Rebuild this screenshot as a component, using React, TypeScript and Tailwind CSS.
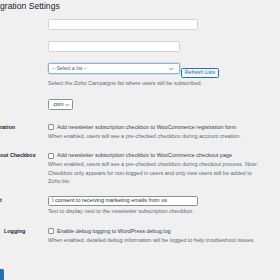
import React from 'react';

const Checkbox: React.FC = () => (
    <span className="inline-block w-[6px] h-[6px] shrink-0 bg-white border border-[#8c8f94] rounded-[1px]" />
);

const Chevron: React.FC = () => (
    <svg width="5" height="4" viewBox="0 0 10 8" className="shrink-0">
        <path d="M1.5 2 L5 5.5 L8.5 2" fill="none" stroke="#50575e" strokeWidth="1.4" />
    </svg>
);

export default function App() {
    return (
        <div className="w-[280px] h-[280px] overflow-hidden bg-[#f0f0f1] text-[#3c434a] font-['Liberation_Sans',Arial,sans-serif]">
            {/* Page title */}
            <h1 className="h-[12px] leading-[12px] text-[8.6px] text-[#1d2327] whitespace-nowrap">gration Settings</h1>

            <div className="grid grid-cols-[48px_1fr]">
                {/* API fields */}
                <div />
                <div className="mt-[7px] w-[150px] h-[11px] bg-white border border-[#d3d3d6] rounded-[1.5px]" />

                <div />
                <div className="mt-[11px] w-[132px] h-[11px] bg-white border border-[#d3d3d6] rounded-[1.5px]" />

                {/* Mailing list */}
                <div />
                <div className="mt-[11px]">
                    <div className="flex items-start gap-[1px]">
                        <div className="w-[132px] h-[11px] bg-white border border-[#8fb3d6] rounded-[1.5px] flex items-center justify-between pl-[3px] pr-[5px] shadow-[0_0_0_0.5px_#b5cfe8]">
                            <span className="text-[5px] leading-none text-[#50575e]">-- Select a list --</span>
                            <Chevron />
                        </div>
                        <button className="mt-[5px] w-[38px] h-[10px] bg-[#f6f7f7] border border-[#2271b1] rounded-[1.5px] text-[5.2px] leading-none text-[#2271b1] flex items-center justify-center">
                            Refresh Lists
                        </button>
                    </div>
                    <p className="mt-[1px] text-[5.5px] leading-[9px] text-[#646970] whitespace-nowrap">
                        Select the Zoho Campaigns list where users will be subscribed.
                    </p>
                </div>

                {/* Domain */}
                <div />
                <div className="mt-[11px] w-[25px] h-[11px] bg-white border border-[#8c8f94] rounded-[1.5px] flex items-center gap-[2px] pl-[3px]">
                    <span className="text-[5.2px] leading-none text-[#2c3338]">.com</span>
                    <Chevron />
                </div>

                {/* Registration */}
                <div className="mt-[12.5px] text-[5.4px] leading-[9px] font-bold text-[#1d2327] whitespace-nowrap">ration</div>
                <div className="mt-[12.5px]">
                    <label className="flex items-center gap-[3px] h-[9px] text-[5.5px] whitespace-nowrap">
                        <Checkbox />
                        Add newsletter subscription checkbox to WooCommerce registration form
                    </label>
                    <p className="text-[5.5px] leading-[8.5px] text-[#646970] whitespace-nowrap">
                        When enabled, users will see a pre-checked checkbox during account creation.
                    </p>
                </div>

                {/* Checkout */}
                <div className="mt-[11px] text-[5.4px] leading-[9px] font-bold text-[#1d2327] whitespace-nowrap">out Checkbox</div>
                <div className="mt-[11px]">
                    <label className="flex items-center gap-[3px] h-[9px] text-[5.5px] whitespace-nowrap">
                        <Checkbox />
                        Add newsletter subscription checkbox to WooCommerce checkout page
                    </label>
                    <p className="text-[5.5px] leading-[8.5px] text-[#646970] whitespace-nowrap">
                        When enabled, users will see a pre-checked checkbox during checkout process. Note:
                        <br />
                        Checkbox only appears for non-logged in users and only new users will be added to
                        <br />
                        Zoho list.
                    </p>
                </div>

                {/* Checkbox text */}
                <div className="mt-[10px] h-[10px] flex items-center text-[5.4px] font-bold text-[#1d2327]">t</div>
                <div className="mt-[10px]">
                    <div className="w-[150px] h-[10px] bg-white border border-[#8c8f94] rounded-[1.5px] flex items-center pl-[3px]">
                        <span className="text-[5.5px] leading-none text-[#2c3338] whitespace-nowrap">I consent to receiving marketing emails from us</span>
                    </div>
                    <p className="mt-[1.5px] text-[5.5px] leading-[9px] text-[#646970] whitespace-nowrap">
                        Text to display next to the newsletter subscription checkbox.
                    </p>
                </div>

                {/* Debug */}
                <div className="mt-[10.5px] pl-[4px] text-[5.4px] leading-[9px] font-bold text-[#1d2327] whitespace-nowrap">Logging</div>
                <div className="mt-[10.5px]">
                    <label className="flex items-center gap-[3px] h-[9px] text-[5.5px] whitespace-nowrap">
                        <Checkbox />
                        Enable debug logging to WordPress debug.log
                    </label>
                    <p className="text-[5.5px] leading-[8.5px] text-[#646970] whitespace-nowrap">
                        When enabled, detailed debug information will be logged to help troubleshoot issues.
                    </p>
                </div>
            </div>

            {/* Submit button, mostly off-screen */}
            <button aria-label="Save Changes" className="block mt-[25px] w-[4px] h-[12px] bg-[#2271b1] rounded-r-[1.5px]" />
        </div>
    );
}
